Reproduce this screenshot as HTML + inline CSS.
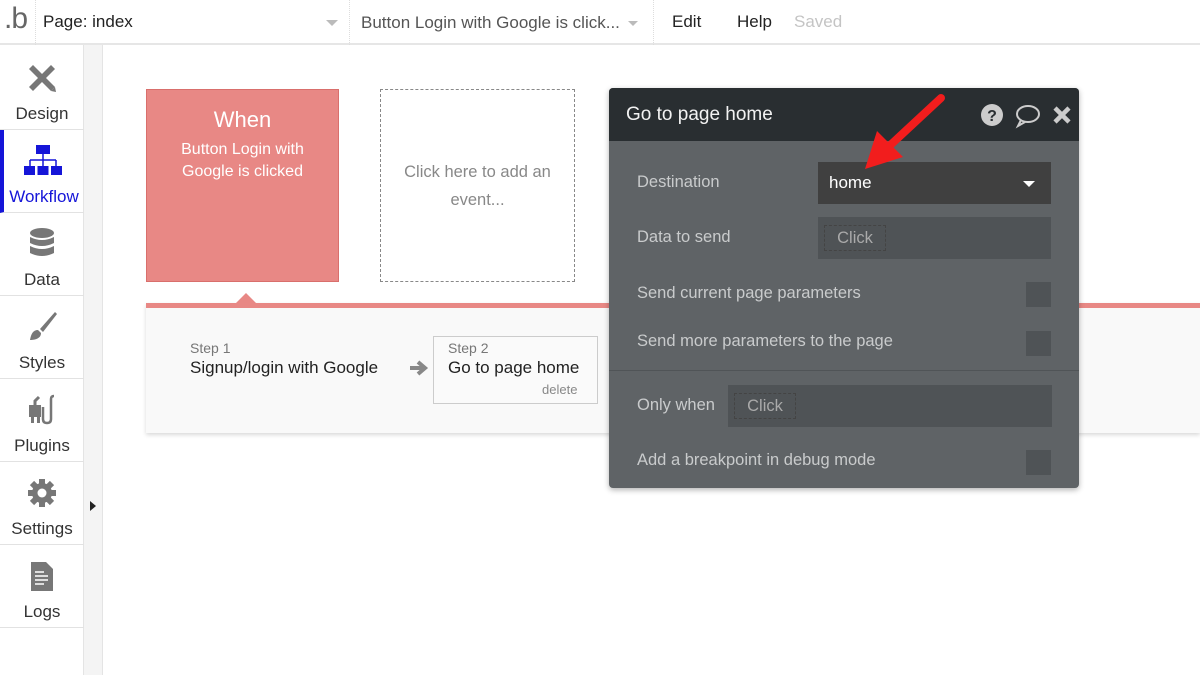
<!DOCTYPE html>
<html><head><style>
*{box-sizing:border-box;margin:0;padding:0}
body{width:1200px;height:675px;overflow:hidden;background:#fff;font-family:"Liberation Sans",sans-serif;position:relative}
.a{position:absolute}
.top{left:0;top:0;width:1200px;height:45px;border-bottom:2px solid #e6e6e6;background:#fff}
.side{left:0;top:45px;width:84px;height:630px;background:#fff;border-right:1px solid #e4e4e4}
.strip{left:84px;top:45px;width:19px;height:630px;background:#f4f4f4;border-right:1px solid #e4e4e4}
.item{position:absolute;left:0;width:84px;height:83px;border-bottom:1px solid #e2e2e2;text-align:center;font-size:17px;color:#333}
.item span{position:absolute;left:0;right:0;bottom:5px}
.item svg{position:absolute;left:25px;top:14px}
.lbl{color:#c9cbcc;font-size:16.5px}
.chk{position:absolute;left:1026px;width:25px;height:25px;background:#4f5356}
</style></head><body>
<div class="a top">
 <div class="a" style="left:4px;top:2px;font-size:30px;color:#666;letter-spacing:-1px">.b</div>
 <div class="a" style="left:35px;top:0;width:1px;height:45px;border-left:1px dotted #ddd"></div>
 <div class="a" style="left:43px;top:12px;font-size:17px;color:#222">Page: index</div>
 <div class="a" style="left:326px;top:20px;border:6px solid transparent;border-top:6px solid #bbb"></div>
 <div class="a" style="left:349px;top:0;width:1px;height:45px;border-left:1px dotted #ddd"></div>
 <div class="a" style="left:361px;top:13px;font-size:17px;color:#555">Button Login with Google is click...</div>
 <div class="a" style="left:628px;top:21px;border:5px solid transparent;border-top:5px solid #bbb"></div>
 <div class="a" style="left:653px;top:0;width:1px;height:45px;border-left:1px dotted #ddd"></div>
 <div class="a" style="left:672px;top:12px;font-size:17px;color:#222">Edit</div>
 <div class="a" style="left:737px;top:12px;font-size:17px;color:#222">Help</div>
 <div class="a" style="left:794px;top:12px;font-size:17px;color:#c4c4c4">Saved</div>
</div>
<div class="a side">
 <div class="item" style="top:2px"><svg width="34" height="34" viewBox="0 0 34 34"><path d="M4 8l4-4 22 22-4 4z" fill="#777"/><path d="M26 4l4 4-22 22-4-4z" fill="#777"/><path d="M26 30l5 1-1-5z" fill="#777"/></svg><span>Design</span></div>
 <div class="item" style="top:85px;color:#1515d8;border-left:4px solid #1515d8"><svg width="40" height="34" viewBox="0 0 40 34" style="left:19px"><rect x="13" y="1" width="14" height="9" fill="#1515d8"/><path d="M20 10v6M7 16h26M7 16v6M20 16v6M33 16v6" stroke="#1515d8" stroke-width="1.5"/><rect x="1" y="22" width="11" height="9" fill="#1515d8"/><rect x="14.5" y="22" width="11" height="9" fill="#1515d8"/><rect x="28" y="22" width="11" height="9" fill="#1515d8"/></svg><span>Workflow</span></div>
 <div class="item" style="top:168px"><svg width="34" height="34" viewBox="0 0 34 34"><ellipse cx="17" cy="6" rx="12" ry="5" fill="#777"/><path d="M5 10q12 6 24 0v6q-12 6-24 0z M5 19q12 6 24 0v7q-12 6-24 0z" fill="#777"/></svg><span>Data</span></div>
 <div class="item" style="top:251px"><svg width="34" height="34" viewBox="0 0 34 34"><path d="M30 2L15 19l3 3L32 4z" fill="#777"/><path d="M13 20c-5 0-7 4-8 10 6 0 11-2 11-7z" fill="#777"/></svg><span>Styles</span></div>
 <div class="item" style="top:334px"><svg width="34" height="34" viewBox="0 0 34 34"><path d="M4 12h12v12H4z M6 24v6h3v-6zM12 24v6h3v-6z" fill="#777"/><path d="M10 12V8l4-4" stroke="#777" stroke-width="3" fill="none"/><path d="M18 14v12q0 4 4 4t4-4V6q0-3 3-3" stroke="#777" stroke-width="2.5" fill="none"/></svg><span>Plugins</span></div>
 <div class="item" style="top:417px"><svg width="34" height="34" viewBox="0 0 34 34"><circle cx="17" cy="17" r="10" fill="#777"/><g stroke="#777" stroke-width="6"><path d="M17 3v28M3 17h28M7 7l20 20M27 7L7 27"/></g><circle cx="17" cy="17" r="4.5" fill="#fff"/></svg><span>Settings</span></div>
 <div class="item" style="top:500px"><svg width="34" height="34" viewBox="0 0 34 34"><path d="M6 3h15l7 7v22H6z" fill="#777"/><path d="M10 13h9M10 17h13M10 21h13M10 25h9" stroke="#fff" stroke-width="1.5"/></svg><span>Logs</span></div>
</div>
<div class="a strip"></div>
<div class="a" style="left:90px;top:501px;border:5px solid transparent;border-left:6px solid #222;border-right:0"></div>

<div class="a" style="left:146px;top:89px;width:193px;height:193px;background:#e88885;border:1px solid #d96f6c;color:#fff;text-align:center">
 <div style="font-size:22px;margin-top:17px">When</div>
 <div style="font-size:16px;line-height:22px;margin-top:6px">Button Login with<br>Google is clicked</div>
</div>
<div class="a" style="left:380px;top:89px;width:195px;height:193px;border:1.5px dashed #888;color:#888;text-align:center;font-size:16.5px;line-height:28px;padding-top:68px">Click here to add an<br>event...</div>

<div class="a" style="left:146px;top:303px;width:1054px;height:130px;background:#f9f9f9;box-shadow:0 2px 4px rgba(0,0,0,.15);border-top:5px solid #e88885"></div>
<div class="a" style="left:236px;top:293px;border:10px solid transparent;border-bottom:10px solid #e88885;border-top:0"></div>
<div class="a" style="left:190px;top:340px;font-size:14px;color:#777">Step 1</div>
<div class="a" style="left:190px;top:358px;font-size:17px;color:#222">Signup/login with Google</div>
<svg class="a" style="left:408px;top:359px" width="22" height="18" viewBox="0 0 22 18"><path d="M2 9h14M10 3l7 6-7 6" stroke="#888" stroke-width="4" fill="none"/></svg>
<div class="a" style="left:433px;top:336px;width:165px;height:68px;border:1.5px solid #ccc;background:#fafafa"></div>
<div class="a" style="left:448px;top:340px;font-size:14px;color:#777">Step 2</div>
<div class="a" style="left:448px;top:358px;font-size:17px;color:#222">Go to page home</div>
<div class="a" style="left:542px;top:382px;font-size:13px;color:#888">delete</div>

<div class="a" style="left:609px;top:88px;width:470px;height:400px;background:#5f6366;border-radius:4px;box-shadow:0 2px 6px rgba(0,0,0,.3);overflow:hidden">
 <div style="height:53px;background:#292e31;color:#f2f2f2;font-size:19px;padding:16px 0 0 17px">Go to page home</div>
</div>
<svg class="a" style="left:980px;top:103px" width="95" height="26" viewBox="0 0 95 26"><circle cx="12" cy="12" r="11" fill="#ccc"/><text x="12" y="18" font-size="16" font-weight="bold" text-anchor="middle" fill="#292e31" font-family="Liberation Sans">?</text><ellipse cx="48" cy="11" rx="11" ry="8" stroke="#ccc" stroke-width="2" fill="none"/><path d="M41 17l-3 6 7-4" stroke="#ccc" stroke-width="2" fill="none"/><path d="M75 5l14 14M89 5L75 19" stroke="#ccc" stroke-width="4.5"/></svg>
<div class="a lbl" style="left:637px;top:173px">Destination</div>
<div class="a" style="left:818px;top:162px;width:233px;height:42px;background:#404040;color:#fff;font-size:17px;padding:11px 0 0 11px">home</div>
<div class="a" style="left:1023px;top:181px;border:6px solid transparent;border-top:6px solid #fff"></div>
<div class="a lbl" style="left:637px;top:228px">Data to send</div>
<div class="a" style="left:818px;top:217px;width:233px;height:42px;background:#4f5356"></div>
<div class="a" style="left:824px;top:225px;width:62px;height:26px;border:1px dashed #444;color:#aaa;font-size:16.5px;text-align:center;padding-top:3px">Click</div>
<div class="a lbl" style="left:637px;top:284px">Send current page parameters</div>
<div class="chk" style="top:282px"></div>
<div class="a lbl" style="left:637px;top:332px">Send more parameters to the page</div>
<div class="chk" style="top:331px"></div>
<div class="a" style="left:609px;top:370px;width:470px;height:1px;background:#505457"></div>
<div class="a lbl" style="left:637px;top:396px">Only when</div>
<div class="a" style="left:728px;top:385px;width:324px;height:42px;background:#4f5356"></div>
<div class="a" style="left:734px;top:393px;width:62px;height:26px;border:1px dashed #444;color:#aaa;font-size:16.5px;text-align:center;padding-top:3px">Click</div>
<div class="a lbl" style="left:637px;top:451px">Add a breakpoint in debug mode</div>
<div class="chk" style="top:450px"></div>

<svg class="a" style="left:855px;top:90px" width="100" height="85" viewBox="0 0 100 85"><path d="M86 8L30 60" stroke="#f21d1d" stroke-width="8" stroke-linecap="round"/><path d="M10 79l12-38 26 26z" fill="#f21d1d"/></svg>
</body></html>
